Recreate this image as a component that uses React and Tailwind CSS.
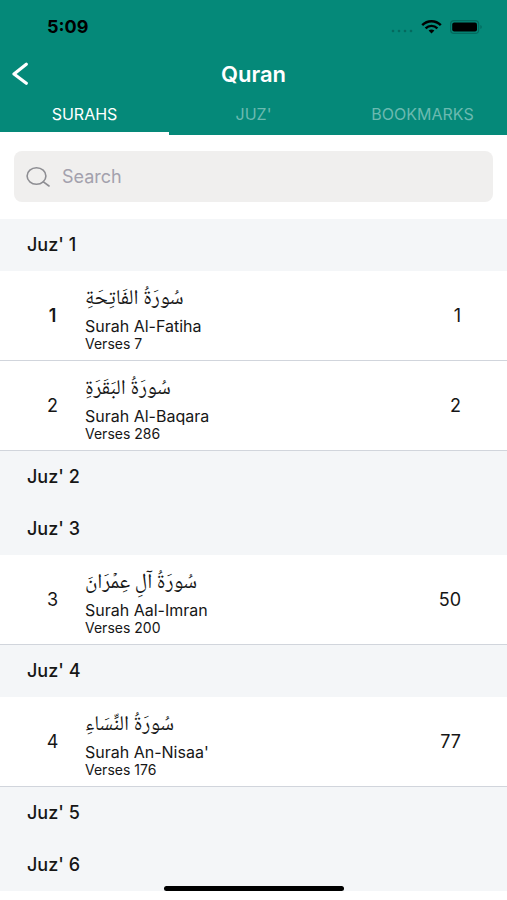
import React, { useState } from 'react';
import clsx from 'clsx';

const tabs = ['SURAHS', "JUZ'", 'BOOKMARKS'];

const sections = [
  {
    juz: 1,
    surahs: [
      { number: 1, arabic: 'سُورَةُ الفَاتِحَةِ', name: 'Surah Al-Fatiha', verses: 7, page: 1 },
      { number: 2, arabic: 'سُورَةُ البَقَرَةِ', name: 'Surah Al-Baqara', verses: 286, page: 2 },
    ],
  },
  { juz: 2, surahs: [] },
  {
    juz: 3,
    surahs: [{ number: 3, arabic: 'سُورَةُ آلِ عِمۡرَانَ', name: 'Surah Aal-Imran', verses: 200, page: 50 }],
  },
  {
    juz: 4,
    surahs: [{ number: 4, arabic: 'سُورَةُ النِّسَاءِ', name: "Surah An-Nisaa'", verses: 176, page: 77 }],
  },
  { juz: 5, surahs: [] },
  { juz: 6, surahs: [] },
];

const StatusBar = () => (
  <div className="flex h-[54px] items-center justify-between pl-[47px] pr-6 text-black">
    <span className="text-lg font-bold">5:09</span>
    <div className="flex items-center gap-2">
      <svg className="mt-2 h-1 w-[22px]" viewBox="0 0 22 4" fill="#046a5e">
        <circle cx="2" cy="2" r="1.3" />
        <circle cx="8" cy="2" r="1.3" />
        <circle cx="14" cy="2" r="1.3" />
        <circle cx="20" cy="2" r="1.3" />
      </svg>
      <svg className="h-[14px] w-[21px]" viewBox="0 0 21 14" fill="none" stroke="currentColor" strokeWidth="2.4">
        <path d="M1.2 5.2C6.4-.1 14.6-.1 19.8 5.2" />
        <path d="M4.6 8.3c3.4-3.3 8.4-3.3 11.8 0" />
        <path d="M7.6 10.6c1.7-1.5 4.1-1.5 5.8 0L10.5 13.6z" fill="currentColor" stroke="none" />
      </svg>
      <svg className="h-[14px] w-[33px]" viewBox="0 0 33 14">
        <rect x="0.6" y="0.6" width="28" height="12.8" rx="3.5" fill="none" stroke="#046a5e" strokeWidth="1.2" />
        <rect x="2.2" y="2.4" width="24.8" height="9.2" rx="2" fill="black" />
        <path d="M30.4 5v4c1.8-.6 1.8-3.4 0-4z" fill="#046a5e" />
      </svg>
    </div>
  </div>
);

const SurahRow = ({ surah, current }) => (
  <li>
    <button type="button" className="flex h-[90px] w-full items-center border-b border-gray-300 bg-white pr-[46px] text-left">
      <span className={clsx('w-[85px] pl-5 text-center text-lg', current && 'font-semibold')}>{surah.number}</span>
      <span className="flex flex-1 flex-col items-start pt-1">
        <span dir="rtl" lang="ar" className="font-['Noto_Naskh_Arabic','Amiri','DejaVu_Sans',serif] text-[21px] leading-8">
          {surah.arabic}
        </span>
        <span className="text-base leading-5">{surah.name}</span>
        <span className="text-sm leading-4">Verses {surah.verses}</span>
      </span>
      <span className="text-lg">{surah.page}</span>
    </button>
  </li>
);

const App = () => {
  const [activeTab, setActiveTab] = useState('SURAHS');
  const [query, setQuery] = useState('');

  const matches = (surah) => surah.name.toLowerCase().includes(query.toLowerCase());

  return (
    <div className="min-h-screen bg-white font-['Inter',sans-serif] text-[#161616]">
      <header className="bg-[#058979] text-white">
        <StatusBar />
        <div className="grid h-10 grid-cols-3 items-center">
          <button type="button" aria-label="Back" className="pl-[11px]">
            <svg className="h-6 w-[18px]" viewBox="0 0 18 24" fill="none" stroke="currentColor" strokeWidth="3.2" strokeLinecap="round" strokeLinejoin="round">
              <path d="M15.3 2.2L3 12l12.3 9.2" />
            </svg>
          </button>
          <h1 className="text-center text-[22px] leading-8 font-semibold">Quran</h1>
        </div>
        <nav className="grid grid-cols-3">
          {tabs.map((tab) => (
            <button
              key={tab}
              type="button"
              onClick={() => setActiveTab(tab)}
              className={clsx(
                'h-[41px] border-b-3 pt-px text-base',
                activeTab === tab ? 'border-white text-white' : 'border-transparent text-[#6bbab0]'
              )}
            >
              {tab}
            </button>
          ))}
        </nav>
      </header>

      <div className="px-[14px] pb-[17px] pt-4">
        <label className="flex h-[51px] items-center gap-3 rounded-lg bg-[#f0efee] px-3">
          <svg className="h-5 w-6 shrink-0 text-[#8e8e93]" viewBox="0 0 24 20" fill="none" stroke="currentColor" strokeWidth="1.6" strokeLinecap="round">
            <ellipse cx="10.5" cy="9" rx="9.4" ry="8.2" />
            <path d="M17.4 14.8l5.6 4.2" />
          </svg>
          <input
            type="text"
            aria-label="Search"
            placeholder="Search"
            value={query}
            onChange={(e) => setQuery(e.target.value)}
            className="w-full bg-transparent text-lg outline-none placeholder:text-[#a3a1ad]"
          />
        </label>
      </div>

      <main>
        {sections.map((section) => (
          <section key={section.juz}>
            <h2 className="flex h-[52px] items-center bg-[#f4f6f8] px-[27px] text-lg font-medium">Juz' {section.juz}</h2>
            <ul>
              {section.surahs.filter(matches).map((surah) => (
                <SurahRow key={surah.number} surah={surah} current={surah.number === 1} />
              ))}
            </ul>
          </section>
        ))}
      </main>

      <div className="fixed inset-x-0 bottom-[9px] flex justify-center">
        <div className="h-[5px] w-[180px] rounded-full bg-black"></div>
      </div>
    </div>
  );
};

export default App;
